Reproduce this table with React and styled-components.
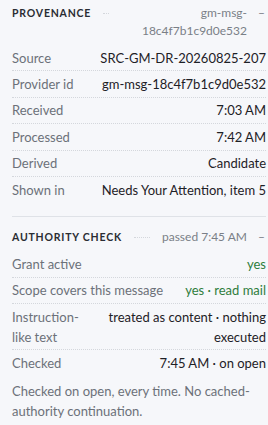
import React from 'react';
import styled, { createGlobalStyle } from 'styled-components';

const GlobalStyle = createGlobalStyle`
  html, body {
    margin: 0;
    padding: 0;
    background: #f6f7fa;
  }
  body {
    font-family: Lato, "Noto Sans", sans-serif;
  }
`;

const provenance = [
  { label: 'Source', value: 'SRC-GM-DR-20260825-207' },
  { label: 'Provider id', value: 'gm-msg-18c4f7b1c9d0e532' },
  { label: 'Received', value: '7:03 AM' },
  { label: 'Processed', value: '7:42 AM' },
  { label: 'Derived', value: 'Candidate' },
  { label: 'Shown in', value: 'Needs Your Attention, item 5' },
];

const authority = [
  { label: 'Grant active', value: 'yes', ok: true },
  { label: 'Scope covers this message', value: 'yes · read mail', ok: true },
  { label: 'Instruction-like text', value: 'treated as content · nothing executed' },
  { label: 'Checked', value: '7:45 AM · on open' },
];

function Panel() {
  return (
    <PanelStyled>
      <Section>
        <Header>
          <Title>Provenance</Title>
          <Leader />
          <Meta>gm-msg-18c4f7b1c9d0e532</Meta>
          <Collapse>–</Collapse>
        </Header>
        {provenance.map((r) => (
          <Row key={r.label}>
            <Label>{r.label}</Label>
            <Value>{r.value}</Value>
          </Row>
        ))}
      </Section>

      <Section $divider>
        <Header>
          <Title>Authority check</Title>
          <Leader />
          <Meta>passed 7:45 AM</Meta>
          <Collapse>–</Collapse>
        </Header>
        {authority.map((r) => (
          <Row key={r.label}>
            <Label>{r.label}</Label>
            <Value $ok={r.ok}>{r.value}</Value>
          </Row>
        ))}
        <Note>Checked on open, every time. No cached-authority continuation.</Note>
      </Section>
    </PanelStyled>
  );
}

const PanelStyled = styled.div`
  width: 268px;
  box-sizing: border-box;
  padding: 0 2px 0 12px;
  font-size: 13px;
  color: #1e2126;
`;

const Section = styled.section`
  padding: ${(p) => (p.$divider ? '11px 0 0' : '4px 0 14px')};
  border-top: ${(p) => (p.$divider ? '1px solid #dfe2e7' : 'none')};
`;

const Header = styled.div`
  display: flex;
  align-items: flex-start;
  line-height: 18px;
  margin-bottom: 5px;
`;

const Title = styled.h2`
  margin: 0;
  flex-shrink: 0;
  font-size: 10.5px;
  font-weight: 700;
  letter-spacing: 0.8px;
  text-transform: uppercase;
  color: #2a2d33;
`;

const Leader = styled.span`
  flex: 1;
  min-width: 6px;
  margin: 9px 12px 0;
  border-top: 1px dotted #d4d7dc;
`;

const Meta = styled.span`
  text-align: right;
  font-size: 12px;
  color: #7a7f87;
`;

const Collapse = styled.span`
  flex-shrink: 0;
  width: 8px;
  margin-left: 11px;
  font-size: 12px;
  color: #7a7f87;
`;

const Row = styled.div`
  display: flex;
  justify-content: space-between;
  gap: 8px;
  padding: 2.7px 0;
  line-height: 20px;
  border-bottom: 1px dotted #d4d7dc;

  &:last-of-type {
    border-bottom: none;
  }
`;

const Label = styled.span`
  color: #6c7179;
`;

const Value = styled.span`
  text-align: right;
  color: ${(p) => (p.$ok ? '#2e7d3c' : '#1e2126')};
`;

const Note = styled.p`
  margin: 5px 0 0;
  line-height: 20px;
  color: #6c7179;
`;

export default function App() {
  return (
    <>
      <GlobalStyle />
      <Panel />
    </>
  );
}
